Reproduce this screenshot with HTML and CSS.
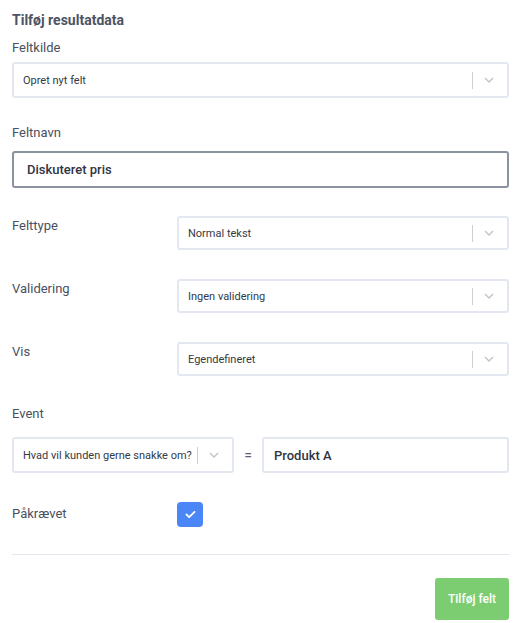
FILE: index.html
```html
<!DOCTYPE html>
<html lang="da">
<head>
<meta charset="utf-8">
<title>Tilføj resultatdata</title>
<link rel="stylesheet" href="styles.css">
</head>
<body>
<div class="page">
  <h2 class="title">Tilføj resultatdata</h2>

  <div class="label label-top">Feltkilde</div>
  <div class="select select-full">
    <span class="select-value">Opret nyt felt</span>
    <span class="select-sep"></span>
    <svg class="chev" viewBox="0 0 10 6" width="10" height="6"><path d="M1 1 L5 5 L9 1" fill="none" stroke="#c6c6c6" stroke-width="1.5"/></svg>
  </div>

  <div class="label label-name">Feltnavn</div>
  <div class="text-input focused">Diskuteret pris</div>

  <div class="row row-first">
    <div class="row-label">Felttype</div>
    <div class="select select-row">
      <span class="select-value">Normal tekst</span>
      <span class="select-sep"></span>
      <svg class="chev" viewBox="0 0 10 6" width="10" height="6"><path d="M1 1 L5 5 L9 1" fill="none" stroke="#c6c6c6" stroke-width="1.5"/></svg>
    </div>
  </div>

  <div class="row">
    <div class="row-label">Validering</div>
    <div class="select select-row">
      <span class="select-value">Ingen validering</span>
      <span class="select-sep"></span>
      <svg class="chev" viewBox="0 0 10 6" width="10" height="6"><path d="M1 1 L5 5 L9 1" fill="none" stroke="#c6c6c6" stroke-width="1.5"/></svg>
    </div>
  </div>

  <div class="row">
    <div class="row-label">Vis</div>
    <div class="select select-row">
      <span class="select-value">Egendefineret</span>
      <span class="select-sep"></span>
      <svg class="chev" viewBox="0 0 10 6" width="10" height="6"><path d="M1 1 L5 5 L9 1" fill="none" stroke="#c6c6c6" stroke-width="1.5"/></svg>
    </div>
  </div>

  <div class="label label-event">Event</div>
  <div class="event-row">
    <div class="select select-event">
      <span class="select-value">Hvad vil kunden gerne snakke om?</span>
      <span class="select-sep"></span>
      <svg class="chev" viewBox="0 0 10 6" width="10" height="6"><path d="M1 1 L5 5 L9 1" fill="none" stroke="#c6c6c6" stroke-width="1.5"/></svg>
    </div>
    <span class="equals">=</span>
    <div class="text-input value-input">Produkt A</div>
  </div>

  <div class="row row-check">
    <div class="row-label check-label">Påkrævet</div>
    <div class="checkbox">
      <svg viewBox="0 0 12 10" width="11" height="9"><path d="M1.5 5 L4.5 8 L10.5 2" fill="none" stroke="#fff" stroke-width="2" stroke-linecap="round" stroke-linejoin="round"/></svg>
    </div>
  </div>

  <hr class="divider">

  <div class="actions">
    <button class="btn-add">Tilføj felt</button>
  </div>
</div>
</body>
</html>
```

FILE: styles.css
```css
html, body {
  margin: 0;
  padding: 0;
  background: #fff;
}

.page {
  padding: 10px 7px 0 12px;
  font-family: Roboto, "Noto Sans", sans-serif;
  color: #4a5060;
}

.title {
  margin: 0;
  font-size: 14px;
  line-height: 20px;
  font-weight: 700;
  color: #4d5463;
}

.label {
  font-size: 13px;
  line-height: 18px;
  color: #4a5060;
}

.label-top { margin-top: 9px; margin-bottom: 5px; }
.label-name { margin-top: 26px; margin-bottom: 9px; }
.label-event { margin-top: 29px; margin-bottom: 14px; }

.select {
  box-sizing: border-box;
  display: flex;
  align-items: center;
  border: 2px solid #e3e7f0;
  border-radius: 3px;
  background: #fff;
  height: 36px;
  padding-left: 9px;
  padding-right: 13px;
}

.select-value {
  flex: 1;
  font-size: 11px;
  color: #333a45;
  white-space: nowrap;
  overflow: hidden;
}

.select-sep {
  width: 1px;
  height: 17px;
  background: #cfcfcf;
  margin-left: 4px;
  margin-right: 11px;
}

.chev { display: block; }

.text-input {
  box-sizing: border-box;
  height: 37px;
  border: 2px solid #8a92a0;
  border-radius: 3px;
  padding-left: 13px;
  display: flex;
  align-items: center;
  font-size: 13px;
  font-weight: 500;
  color: #2f3542;
}

.row {
  display: flex;
  align-items: flex-start;
  margin-top: 29px;
}

.row-first { margin-top: 28px; }

.row-label {
  width: 165px;
  flex: none;
  padding-top: 1px;
  font-size: 13px;
  line-height: 18px;
  color: #4a5060;
}

.select-row {
  flex: 1;
  height: 34px;
  padding-left: 9px;
}

.event-row {
  display: flex;
  align-items: center;
}

.select-event {
  width: 222px;
  flex: none;
  padding-left: 9px;
}

.equals {
  width: 28px;
  text-align: center;
  font-size: 14px;
  color: #5a6272;
}

.value-input {
  flex: 1;
  height: 36px;
  border-color: #e3e7f0;
  padding-left: 10px;
}

.row-check { margin-top: 29px; }

.check-label { padding-top: 3px; }

.checkbox {
  width: 26px;
  height: 25px;
  border-radius: 4px;
  background: #4a86f5;
  display: flex;
  align-items: center;
  justify-content: center;
}

.divider {
  border: none;
  border-top: 1px solid #e2e6ee;
  margin: 27px 0 0 0;
}

.actions {
  display: flex;
  justify-content: flex-end;
  margin-top: 23px;
}

.btn-add {
  width: 74px;
  height: 42px;
  border: none;
  border-radius: 3px;
  background: #7ccd72;
  color: #fff;
  font-family: Roboto, "Noto Sans", sans-serif;
  font-size: 12px;
  font-weight: 500;
  padding: 0;
}
```
